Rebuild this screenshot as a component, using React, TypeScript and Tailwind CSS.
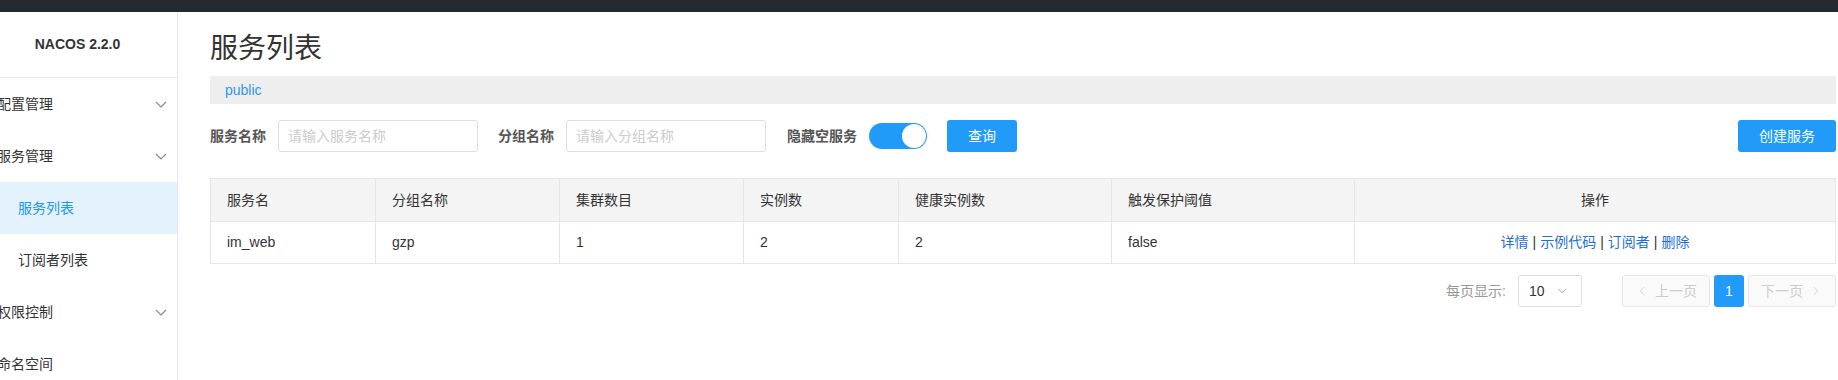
import { ChevronLeft, ChevronRight, ChevronDown } from 'lucide-react';

const COLS = ['服务名', '分组名称', '集群数目', '实例数', '健康实例数', '触发保护阈值'];
const ROW = ['im_web', 'gzp', '1', '2', '2', 'false'];

function Chevron() {
  return (
    <svg width="12" height="7" viewBox="0 0 12 7" fill="none" className="shrink-0">
      <polyline points="1,1 6,6 11,1" stroke="#8a8a8a" strokeWidth="1.2" />
    </svg>
  );
}

function MenuItem({ label, sub, active, arrow }: { label: string; sub?: boolean; active?: boolean; arrow?: boolean }) {
  return (
    <div
      className={`h-[52px] flex items-center justify-between pr-[10px] text-[14px] ${
        sub ? 'pl-[18px]' : 'ml-[-3px]'
      } ${active ? 'bg-[#e4f2fd] text-[#2196f3]' : 'text-[#333]'}`}
    >
      <span>{label}</span>
      {arrow && <Chevron />}
    </div>
  );
}

export default function App() {
  return (
    <div className="w-[1838px] h-[380px] overflow-hidden bg-white flex flex-col font-['Liberation_Sans','Noto_Sans_CJK_SC',sans-serif]">
      <div className="h-[12px] bg-[#24292e] shrink-0" />
      <div className="flex flex-1 min-h-0">
        <aside className="w-[178px] shrink-0 border-r border-[#e8e8e8] overflow-hidden">
          <div className="h-[66px] flex items-center justify-center pr-[22px] border-b border-[#e8e8e8]">
            <span className="text-[14px] font-bold text-[#333]">NACOS 2.2.0</span>
          </div>
          <MenuItem label="配置管理" arrow />
          <MenuItem label="服务管理" arrow />
          <MenuItem label="服务列表" sub active />
          <MenuItem label="订阅者列表" sub />
          <MenuItem label="权限控制" arrow />
          <MenuItem label="命名空间" />
        </aside>

        <main className="flex-1 pl-[32px] pr-[2px] min-w-0">
          <h1 className="pt-[19px] h-[55px] leading-[36px] text-[28px] text-[#333] font-normal mb-[9px]">服务列表</h1>
          <div className="h-[28px] bg-[#eeeeee] pl-[15px] flex items-center text-[14px] text-[#2d96f5]">public</div>

          <div className="mt-[16px] h-[32px] flex items-center">
            <span className="text-[14px] font-bold text-[#555]">服务名称</span>
            <div className="ml-[12px] w-[200px] h-[32px] border border-[#dcdee3] rounded-[3px] flex items-center pl-[9px] text-[14px] text-[#ccc]">请输入服务名称</div>
            <span className="ml-[20px] text-[14px] font-bold text-[#555]">分组名称</span>
            <div className="ml-[12px] w-[200px] h-[32px] border border-[#dcdee3] rounded-[3px] flex items-center pl-[9px] text-[14px] text-[#ccc]">请输入分组名称</div>
            <span className="ml-[21px] text-[14px] font-bold text-[#555]">隐藏空服务</span>
            <div className="ml-[12px] w-[58px] h-[26px] rounded-full bg-[#209bfa] flex items-center justify-end pr-[1px]">
              <div className="w-[24px] h-[24px] rounded-full bg-white" />
            </div>
            <button className="ml-[20px] w-[70px] h-[32px] rounded-[3px] bg-[#209bfa] text-white text-[14px]">查询</button>
            <button className="ml-auto w-[98px] h-[32px] rounded-[3px] bg-[#209bfa] text-white text-[14px]">创建服务</button>
          </div>

          <div className="mt-[26px] border border-[#e6e6e6] text-[14px] text-[#333]">
            <div className="grid grid-cols-[165px_184px_184px_155px_213px_243px_1fr] h-[43px] bg-[#f4f4f4] border-b border-[#e6e6e6]">
              {COLS.map((c) => (
                <div key={c} className="border-r border-[#e6e6e6] pl-[16px] flex items-center">{c}</div>
              ))}
              <div className="flex items-center justify-center">操作</div>
            </div>
            <div className="grid grid-cols-[165px_184px_184px_155px_213px_243px_1fr] h-[41px]">
              {ROW.map((c, i) => (
                <div key={i} className="border-r border-[#e6e6e6] pl-[16px] flex items-center">{c}</div>
              ))}
              <div className="flex items-center justify-center gap-[4px]">
                <span className="text-[#1f6fd6]">详情</span>
                <span className="text-[#333]">|</span>
                <span className="text-[#1f6fd6]">示例代码</span>
                <span className="text-[#333]">|</span>
                <span className="text-[#1f6fd6]">订阅者</span>
                <span className="text-[#333]">|</span>
                <span className="text-[#1f6fd6]">删除</span>
              </div>
            </div>
          </div>

          <div className="mt-[11px] flex items-center justify-end text-[14px]">
            <span className="text-[#999]">每页显示:</span>
            <div className="ml-[12px] w-[64px] h-[32px] border border-[#dcdee3] rounded-[3px] flex items-center justify-between pl-[10px] pr-[12px] text-[#333]">
              <span>10</span>
              <ChevronDown size={14} strokeWidth={1.5} className="text-[#999]" />
            </div>
            <div className="ml-[40px] w-[88px] h-[32px] border border-[#e6e6e6] bg-[#fafafa] rounded-[3px] flex items-center justify-center gap-[6px] text-[#ccc]">
              <ChevronLeft size={14} strokeWidth={1.5} />
              <span>上一页</span>
            </div>
            <div className="ml-[4px] w-[30px] h-[32px] rounded-[3px] bg-[#209bfa] text-white flex items-center justify-center">1</div>
            <div className="ml-[4px] w-[88px] h-[32px] border border-[#e6e6e6] bg-[#fafafa] rounded-[3px] flex items-center justify-center gap-[6px] text-[#ccc]">
              <span>下一页</span>
              <ChevronRight size={14} strokeWidth={1.5} />
            </div>
          </div>
        </main>
      </div>
    </div>
  );
}
